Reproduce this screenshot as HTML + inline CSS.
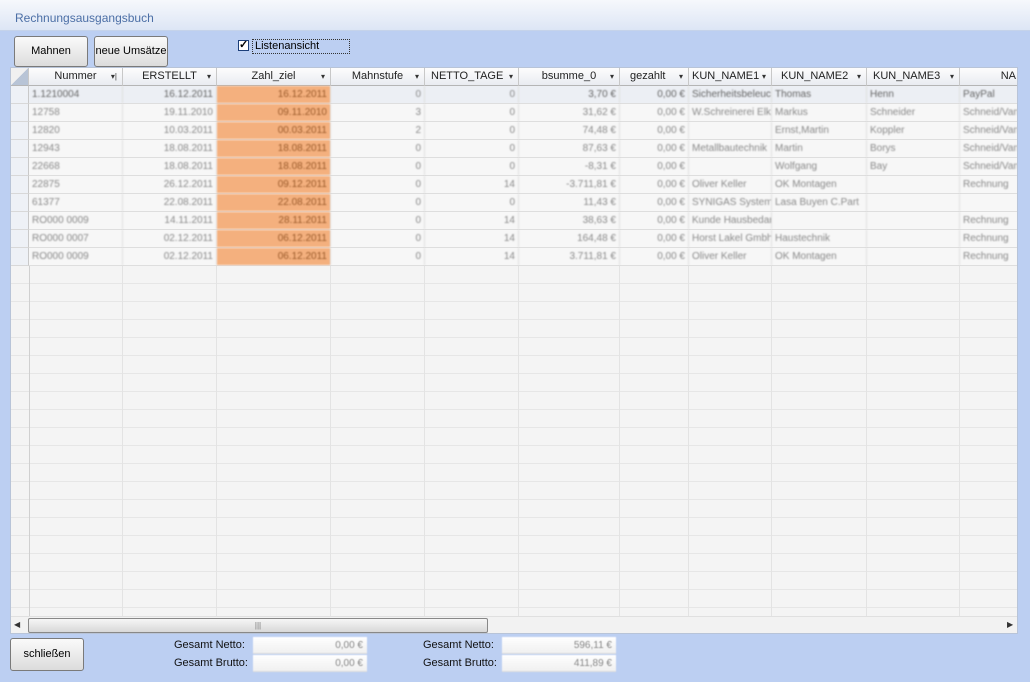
<!DOCTYPE html>
<html><head><meta charset="utf-8"><style>
*{margin:0;padding:0;box-sizing:border-box}
body{width:1030px;height:682px;overflow:hidden;background:#bccff2;font-family:"Liberation Sans",sans-serif;font-size:11px;position:relative}
.title{position:absolute;left:0;top:0;width:1030px;height:31px;background:linear-gradient(#f6f8fc,#dde6f5);border-bottom:1px solid #c5d3ea;color:#4c6fa6;font-size:12px;padding:11px 0 0 15px}
.btn{position:absolute;background:linear-gradient(#fafafa,#dcdcdc);border:1px solid #7a7a7a;border-radius:3px;font-size:11px;color:#000;text-align:center}
.grid{position:absolute;left:10px;top:67px;width:1008px;height:567px;background-color:#f4f4f4;background-image:repeating-linear-gradient(to bottom,transparent 0,transparent 17px,#e6e6e6 17px,#e6e6e6 18px);background-position:0 0;border:1px solid #b8c4d8;overflow:hidden}
.hdr{position:absolute;top:0;height:18px;background:linear-gradient(#fdfdfd,#e9ecf1);border-right:1px solid #c8c8c8;border-bottom:1px solid #b5b5b5;font-size:11px;color:#222;line-height:17px;text-align:center;white-space:nowrap;overflow:hidden}
.hdr span.d{position:absolute;right:5px;top:0;font-size:8px;color:#333}
.vl{position:absolute;top:18px;height:530px;width:1px;background:#e3e3e3}
.row{position:absolute;left:0;width:1008px;height:18px;background:#f7f7f7;border-bottom:1px solid #dedede}
.c{position:absolute;top:0;height:17px;line-height:17px;color:#8a8a8a;font-size:10px;white-space:nowrap;overflow:hidden;filter:blur(0.7px);border-right:1px solid #e0e0e0;padding:0 3px}
.r{text-align:right}
.o{background:#f4b07e;color:#9a5a2a}
.sel{position:absolute;left:0;width:18px;height:18px;background:#eef1f6;border-right:1px solid #c9c9c9;border-bottom:1px solid #d8d8d8}
.hs{position:absolute;left:0;top:548px;width:1008px;height:18px;background:#f2f2f2;border-top:1px solid #e0e0e0}
.lbl{position:absolute;font-size:11px;color:#111}
.box{position:absolute;width:114px;height:17px;background:linear-gradient(#fff,#f0f0f0);border-bottom:1px solid #ddd;color:#888;font-size:10px;text-align:right;padding-right:4px;line-height:17px;filter:blur(0.4px)}
</style></head><body>
<div class="title">Rechnungsausgangsbuch</div>
<div class="btn" style="left:14px;top:36px;width:74px;height:31px;line-height:29px">Mahnen</div>
<div class="btn" style="left:94px;top:36px;width:74px;height:31px;line-height:29px">neue Umsätze</div>
<div style="position:absolute;left:238px;top:40px;width:11px;height:11px;border:1px solid #1c3f7a;background:#fff;font-size:11px;line-height:9px;text-align:center;color:#000;font-weight:bold">✓</div>
<div style="position:absolute;left:252px;top:39px;width:98px;height:15px;border:1px dotted #333;font-size:11px;padding-left:2px;line-height:13px">Listenansicht</div>

<div class="grid">
<div class="hdr" style="left:0;width:18px;background:linear-gradient(135deg,#f0f0f0 50%,#b8c4d6 50%)"></div>
<div class="hdr" style="left:18px;width:94px">Nummer<span class="d">▾|</span></div>
<div class="hdr" style="left:112px;width:94px">ERSTELLT<span class="d">▾</span></div>
<div class="hdr" style="left:206px;width:114px">Zahl_ziel<span class="d">▾</span></div>
<div class="hdr" style="left:320px;width:94px">Mahnstufe<span class="d">▾</span></div>
<div class="hdr" style="left:414px;width:94px;text-align:left;padding-left:6px">NETTO_TAGE<span class="d">▾</span></div>
<div class="hdr" style="left:508px;width:101px">bsumme_0<span class="d">▾</span></div>
<div class="hdr" style="left:609px;width:69px;text-align:left;padding-left:10px">gezahlt<span class="d">▾</span></div>
<div class="hdr" style="left:678px;width:83px;text-align:left;padding-left:3px">KUN_NAME1<span class="d">▾</span></div>
<div class="hdr" style="left:761px;width:95px;text-align:left;padding-left:9px">KUN_NAME2<span class="d">▾</span></div>
<div class="hdr" style="left:856px;width:93px;text-align:left;padding-left:6px">KUN_NAME3<span class="d">▾</span></div>
<div class="hdr" style="left:949px;width:59px;text-align:right;padding-right:2px">NA</div>

<div class="vl" style="left:18px;background:#d0d0d0"></div>
<div class="vl" style="left:111px"></div><div class="vl" style="left:205px"></div><div class="vl" style="left:319px"></div><div class="vl" style="left:413px"></div><div class="vl" style="left:507px"></div><div class="vl" style="left:608px"></div><div class="vl" style="left:677px"></div><div class="vl" style="left:760px"></div><div class="vl" style="left:855px"></div><div class="vl" style="left:948px"></div>

<div class="row" style="top:18px;background:#eceff4"><div class="sel"></div><div class="c" style="left:18px;width:94px;color:#666">1.1210004</div><div class="c r" style="left:112px;width:94px;color:#666">16.12.2011</div><div class="c r o" style="left:206px;width:114px">16.12.2011</div><div class="c r" style="left:320px;width:94px">0</div><div class="c r" style="left:414px;width:94px">0</div><div class="c r" style="left:508px;width:101px;color:#666">3,70 €</div><div class="c r" style="left:609px;width:69px;color:#666">0,00 €</div><div class="c" style="left:678px;width:83px;color:#666">Sicherheitsbeleuchtung</div><div class="c" style="left:761px;width:95px;color:#666">Thomas</div><div class="c" style="left:856px;width:93px;color:#666">Henn</div><div class="c" style="left:949px;width:59px;color:#666">PayPal</div></div>
<div class="row" style="top:36px"><div class="sel"></div><div class="c" style="left:18px;width:94px">12758</div><div class="c r" style="left:112px;width:94px">19.11.2010</div><div class="c r o" style="left:206px;width:114px">09.11.2010</div><div class="c r" style="left:320px;width:94px">3</div><div class="c r" style="left:414px;width:94px">0</div><div class="c r" style="left:508px;width:101px">31,62 €</div><div class="c r" style="left:609px;width:69px">0,00 €</div><div class="c" style="left:678px;width:83px">W.Schreinerei Elk</div><div class="c" style="left:761px;width:95px">Markus</div><div class="c" style="left:856px;width:93px">Schneider</div><div class="c" style="left:949px;width:59px">Schneid/Van</div></div>
<div class="row" style="top:54px"><div class="sel"></div><div class="c" style="left:18px;width:94px">12820</div><div class="c r" style="left:112px;width:94px">10.03.2011</div><div class="c r o" style="left:206px;width:114px">00.03.2011</div><div class="c r" style="left:320px;width:94px">2</div><div class="c r" style="left:414px;width:94px">0</div><div class="c r" style="left:508px;width:101px">74,48 €</div><div class="c r" style="left:609px;width:69px">0,00 €</div><div class="c" style="left:678px;width:83px"></div><div class="c" style="left:761px;width:95px">Ernst,Martin</div><div class="c" style="left:856px;width:93px">Koppler</div><div class="c" style="left:949px;width:59px">Schneid/Van</div></div>
<div class="row" style="top:72px"><div class="sel"></div><div class="c" style="left:18px;width:94px">12943</div><div class="c r" style="left:112px;width:94px">18.08.2011</div><div class="c r o" style="left:206px;width:114px">18.08.2011</div><div class="c r" style="left:320px;width:94px">0</div><div class="c r" style="left:414px;width:94px">0</div><div class="c r" style="left:508px;width:101px">87,63 €</div><div class="c r" style="left:609px;width:69px">0,00 €</div><div class="c" style="left:678px;width:83px">Metallbautechnik</div><div class="c" style="left:761px;width:95px">Martin</div><div class="c" style="left:856px;width:93px">Borys</div><div class="c" style="left:949px;width:59px">Schneid/Van</div></div>
<div class="row" style="top:90px"><div class="sel"></div><div class="c" style="left:18px;width:94px">22668</div><div class="c r" style="left:112px;width:94px">18.08.2011</div><div class="c r o" style="left:206px;width:114px">18.08.2011</div><div class="c r" style="left:320px;width:94px">0</div><div class="c r" style="left:414px;width:94px">0</div><div class="c r" style="left:508px;width:101px">-8,31 €</div><div class="c r" style="left:609px;width:69px">0,00 €</div><div class="c" style="left:678px;width:83px"></div><div class="c" style="left:761px;width:95px">Wolfgang</div><div class="c" style="left:856px;width:93px">Bay</div><div class="c" style="left:949px;width:59px">Schneid/Van</div></div>
<div class="row" style="top:108px"><div class="sel"></div><div class="c" style="left:18px;width:94px">22875</div><div class="c r" style="left:112px;width:94px">26.12.2011</div><div class="c r o" style="left:206px;width:114px">09.12.2011</div><div class="c r" style="left:320px;width:94px">0</div><div class="c r" style="left:414px;width:94px">14</div><div class="c r" style="left:508px;width:101px">-3.711,81 €</div><div class="c r" style="left:609px;width:69px">0,00 €</div><div class="c" style="left:678px;width:83px">Oliver Keller</div><div class="c" style="left:761px;width:95px">OK Montagen</div><div class="c" style="left:856px;width:93px"></div><div class="c" style="left:949px;width:59px">Rechnung</div></div>
<div class="row" style="top:126px"><div class="sel"></div><div class="c" style="left:18px;width:94px">61377</div><div class="c r" style="left:112px;width:94px">22.08.2011</div><div class="c r o" style="left:206px;width:114px">22.08.2011</div><div class="c r" style="left:320px;width:94px">0</div><div class="c r" style="left:414px;width:94px">0</div><div class="c r" style="left:508px;width:101px">11,43 €</div><div class="c r" style="left:609px;width:69px">0,00 €</div><div class="c" style="left:678px;width:83px">SYNIGAS Systeme</div><div class="c" style="left:761px;width:95px">Lasa Buyen C.Part</div><div class="c" style="left:856px;width:93px"></div><div class="c" style="left:949px;width:59px"></div></div>
<div class="row" style="top:144px"><div class="sel"></div><div class="c" style="left:18px;width:94px">RO000 0009</div><div class="c r" style="left:112px;width:94px">14.11.2011</div><div class="c r o" style="left:206px;width:114px">28.11.2011</div><div class="c r" style="left:320px;width:94px">0</div><div class="c r" style="left:414px;width:94px">14</div><div class="c r" style="left:508px;width:101px">38,63 €</div><div class="c r" style="left:609px;width:69px">0,00 €</div><div class="c" style="left:678px;width:83px">Kunde Hausbedarf</div><div class="c" style="left:761px;width:95px"></div><div class="c" style="left:856px;width:93px"></div><div class="c" style="left:949px;width:59px">Rechnung</div></div>
<div class="row" style="top:162px"><div class="sel"></div><div class="c" style="left:18px;width:94px">RO000 0007</div><div class="c r" style="left:112px;width:94px">02.12.2011</div><div class="c r o" style="left:206px;width:114px">06.12.2011</div><div class="c r" style="left:320px;width:94px">0</div><div class="c r" style="left:414px;width:94px">14</div><div class="c r" style="left:508px;width:101px">164,48 €</div><div class="c r" style="left:609px;width:69px">0,00 €</div><div class="c" style="left:678px;width:83px">Horst Lakel Gmbh</div><div class="c" style="left:761px;width:95px">Haustechnik</div><div class="c" style="left:856px;width:93px"></div><div class="c" style="left:949px;width:59px">Rechnung</div></div>
<div class="row" style="top:180px"><div class="sel"></div><div class="c" style="left:18px;width:94px">RO000 0009</div><div class="c r" style="left:112px;width:94px">02.12.2011</div><div class="c r o" style="left:206px;width:114px">06.12.2011</div><div class="c r" style="left:320px;width:94px">0</div><div class="c r" style="left:414px;width:94px">14</div><div class="c r" style="left:508px;width:101px">3.711,81 €</div><div class="c r" style="left:609px;width:69px">0,00 €</div><div class="c" style="left:678px;width:83px">Oliver Keller</div><div class="c" style="left:761px;width:95px">OK Montagen</div><div class="c" style="left:856px;width:93px"></div><div class="c" style="left:949px;width:59px">Rechnung</div></div>

<div class="hs">
<div style="position:absolute;left:3px;top:3px;font-size:8px;color:#333">◀</div>
<div style="position:absolute;left:17px;top:1px;width:460px;height:15px;border:1px solid #888;border-radius:2px;background:linear-gradient(#f6f6f6,#d8d8d8);text-align:center;font-size:8px;line-height:13px;color:#777">|||</div>
<div style="position:absolute;left:996px;top:3px;font-size:8px;color:#333">▶</div>
</div>
</div>

<div class="btn" style="left:10px;top:638px;width:74px;height:33px;line-height:31px">schließen</div>
<div class="lbl" style="left:174px;top:639px">Gesamt Netto:</div>
<div class="lbl" style="left:174px;top:657px">Gesamt Brutto:</div>
<div class="box" style="left:253px;top:637px">0,00 €</div>
<div class="box" style="left:253px;top:655px">0,00 €</div>
<div class="lbl" style="left:423px;top:639px">Gesamt Netto:</div>
<div class="lbl" style="left:423px;top:657px">Gesamt Brutto:</div>
<div class="box" style="left:502px;top:637px">596,11 €</div>
<div class="box" style="left:502px;top:655px">411,89 €</div>
</body></html>
